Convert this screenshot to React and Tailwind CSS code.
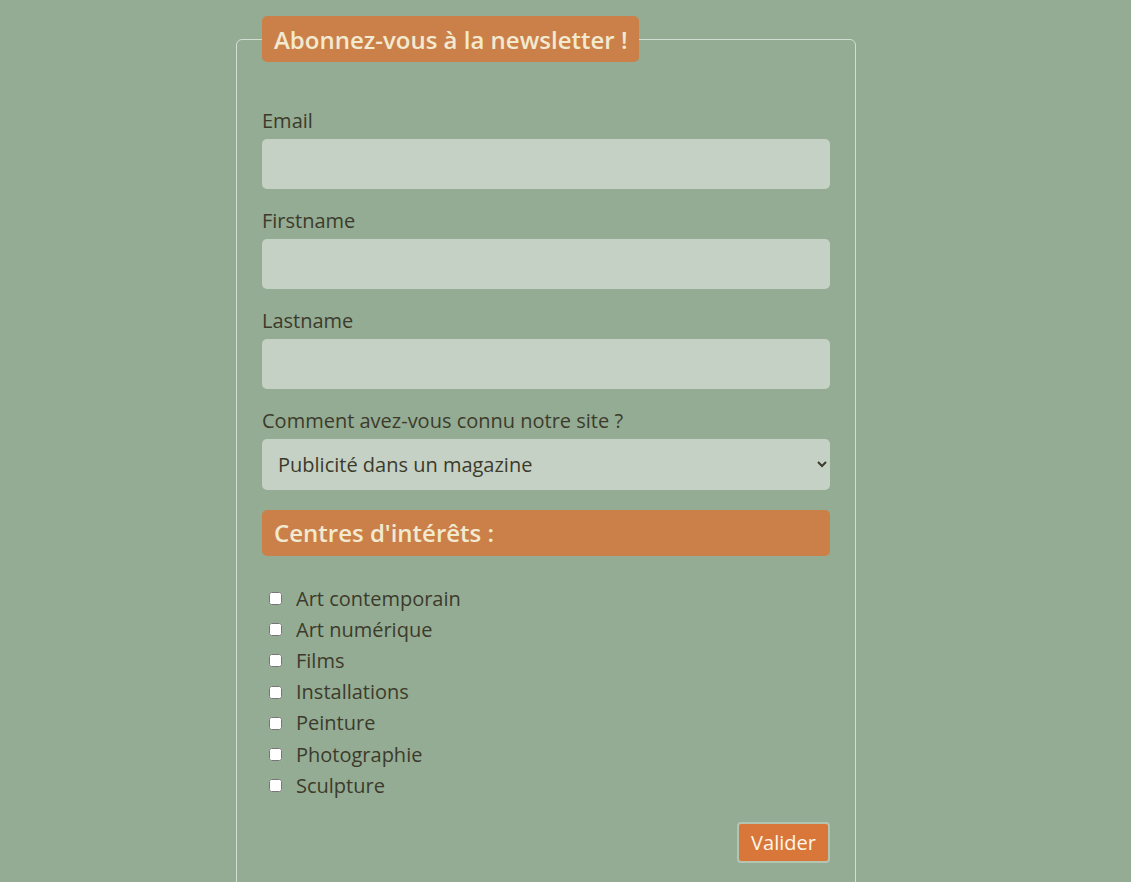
import React from 'react'

const interests = [
  'Art contemporain',
  'Art numérique',
  'Films',
  'Installations',
  'Peinture',
  'Photographie',
  'Sculpture'
]

const Field = ({ label, id }) => (
  <div className="mb-[19px]">
    <label htmlFor={id} className="block h-[27px] leading-[25px] text-[20px] text-[#3c3b2b]">
      {label}
    </label>
    <input
      id={id}
      type="text"
      className="mt-[4px] block w-full h-[50px] rounded-[5px] bg-[#c5d1c5] px-[15px] text-[20px] text-[#3c3b2b] outline-none"
    />
  </div>
)

export default function App() {
  return (
    <div className="min-h-screen bg-[#94ac94] pt-4 pl-[236px] font-['Open_Sans',sans-serif]">
      <fieldset className="w-[620px] rounded-[6px] border border-[#d4ddd2] px-[25px] pb-[60px]">
        <legend className="h-[46px] rounded-[5px] bg-[#cb8049] px-3 text-[24px] font-semibold leading-[48px] text-[#f2ead0]">
          Abonnez-vous à la newsletter !
        </legend>

        <div className="pt-[46px]">
          <Field label="Email" id="email" />
          <Field label="Firstname" id="firstname" />
          <Field label="Lastname" id="lastname" />

          {/* Source select */}
          <label htmlFor="source" className="block h-[27px] leading-[25px] text-[20px] text-[#3c3b2b]">
            Comment avez-vous connu notre site ?
          </label>
          <select
            id="source"
            defaultValue="magazine"
            className="mt-[4px] block w-full h-[51px] rounded-[5px] bg-[#c5d1c5] pl-[12px] pr-[8px] text-[20px] text-[#3c3b2b] outline-none"
          >
            <option value="magazine">Publicité dans un magazine</option>
            <option value="web">Internet</option>
            <option value="friend">Bouche à oreille</option>
          </select>

          {/* Interests */}
          <div className="mt-[20px] h-[46px] rounded-[5px] bg-[#cb8049] px-3 text-[24px] font-semibold leading-[46px] text-[#f2ead0]">
            Centres d'intérêts :
          </div>

          <div className="mt-[27px] pl-[7px]">
            {interests.map((item) => (
              <label key={item} className="flex h-[31.2px] items-center gap-[14px] text-[20px] text-[#3c3b2b]">
                <input type="checkbox" className="h-[13px] w-[13px]" />
                <span>{item}</span>
              </label>
            ))}
          </div>

          <div className="mt-[21px] flex justify-end">
            <button className="h-[41px] w-[93px] rounded-[4px] border-2 border-[#b3c5b0] bg-[#d9773a] text-[20px] text-[#fdf6ea]">
              Valider
            </button>
          </div>
        </div>
      </fieldset>
    </div>
  )
}
